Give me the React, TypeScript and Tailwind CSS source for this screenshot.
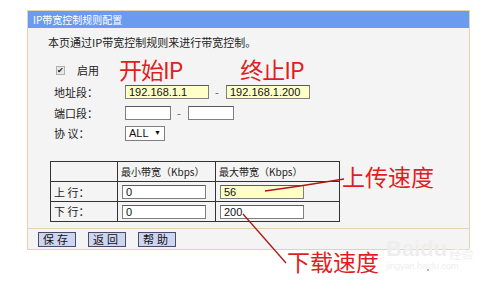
import React from "react";

const ui = { fontFamily: '"Noto Sans CJK SC", "Liberation Sans", sans-serif' };
const num = { fontFamily: '"Liberation Sans", Arial, sans-serif' };

function Field({ value = "", w, yellow = false }: { value?: string; w: string; yellow?: boolean }) {
  return (
    <div
      className={`${w} h-[14px] border border-[#7f7f7f] border-t-[#5a5a5a] ${yellow ? "bg-[#ffffc8]" : "bg-white"} text-[11px] leading-[12px] pl-[3px] text-[#111]`}
      style={num}
    >
      {value}
    </div>
  );
}

function Btn({ label }: { label: string }) {
  return (
    <div className="h-[15px] px-[4px] border border-[#4a4a6a] bg-[#cdd5ef] text-[11px] leading-[13px] tracking-[3px] text-[#111]">
      {label}
    </div>
  );
}

export default function App() {
  return (
    <div className="relative w-[500px] h-[293px] bg-white overflow-hidden" style={ui}>
      <div className="ml-[27px] mt-[10px] w-[443px] h-[240px] border border-[#e3d3b4] bg-[#f4f4f4] flex flex-col">
        {/* title bar */}
        <div className="h-[17px] bg-[#6a9bf0] text-white text-[10px] leading-[17px] pl-[5px]">IP带宽控制规则配置</div>

        <div className="flex-1 pl-[20px]">
          <div className="mt-[8px] h-[12px] text-[11px] leading-[12px] text-[#222]">本页通过IP带宽控制规则来进行带宽控制。</div>

          {/* enable row */}
          <div className="mt-[8px] h-[28px] flex items-center">
            <div className="ml-[8px] w-[9px] h-[9px] border border-[#b0b0b0] bg-[#e8e8e8] flex items-center justify-center text-[8px] leading-none text-[#222]">✔</div>
            <span className="ml-[12px] text-[11px] text-[#222]">启用</span>
            <span className="ml-[20px] text-[23px] leading-none tracking-[-1px] text-[#e11d1d] -mt-[2px]">开始IP</span>
            <span className="ml-[58px] text-[23px] leading-none tracking-[-1px] text-[#e11d1d] -mt-[2px]">终止IP</span>
          </div>

          {/* address */}
          <div className="mt-[1px] h-[14px] flex items-center">
            <span className="ml-[6px] w-[71px] text-[11px] text-[#222]">地址段：</span>
            <Field value="192.168.1.1" w="w-[84px]" yellow />
            <span className="mx-[6px] w-[5px] text-[11px] text-[#555]">-</span>
            <Field value="192.168.1.200" w="w-[84px]" yellow />
          </div>

          {/* port */}
          <div className="mt-[7px] h-[14px] flex items-center">
            <span className="ml-[6px] w-[71px] text-[11px] text-[#222]">端口段：</span>
            <Field w="w-[46px]" />
            <span className="mx-[6px] w-[5px] text-[11px] text-[#555]">-</span>
            <Field w="w-[46px]" />
          </div>

          {/* protocol */}
          <div className="mt-[6px] h-[15px] flex items-center">
            <span className="ml-[6px] w-[71px] text-[11px] text-[#222]">协 议：</span>
            <div className="w-[40px] h-[15px] border border-[#7f7f7f] bg-white flex items-center justify-between px-[3px] text-[11px] text-[#111]" style={num}>
              <span>ALL</span>
              <span className="text-[7px]">▼</span>
            </div>
          </div>

          {/* bandwidth table */}
          <div className="mt-[20px] ml-[2px] w-[290px] border border-[#333] text-[10px] text-[#222]">
            <div className="h-[20px] flex border-b border-[#333]">
              <div className="w-[67px] border-r border-[#333]" />
              <div className="w-[98px] border-r border-[#333] pl-[3px] leading-[20px]">最小带宽（Kbps）</div>
              <div className="flex-1 pl-[3px] leading-[20px]">最大带宽（Kbps）</div>
            </div>
            <div className="h-[20px] flex border-b border-[#333]">
              <div className="w-[67px] border-r border-[#333] pl-[3px] leading-[20px] text-[11px]">上 行：</div>
              <div className="w-[98px] border-r border-[#333] pl-[4px] flex items-center">
                <Field value="0" w="w-[84px]" />
              </div>
              <div className="flex-1 pl-[4px] flex items-center">
                <Field value="56" w="w-[84px]" yellow />
              </div>
            </div>
            <div className="h-[19px] flex">
              <div className="w-[67px] border-r border-[#333] pl-[3px] leading-[19px] text-[11px]">下 行：</div>
              <div className="w-[98px] border-r border-[#333] pl-[4px] flex items-center">
                <Field value="0" w="w-[84px]" />
              </div>
              <div className="flex-1 pl-[4px] flex items-center">
                <Field value="200" w="w-[84px]" />
              </div>
            </div>
          </div>
        </div>

        {/* footer */}
        <div className="h-[21px] border-t border-[#e3d3b4] flex items-center gap-[12px] pl-[10px]">
          <Btn label="保存" />
          <Btn label="返回" />
          <Btn label="帮助" />
        </div>
      </div>

      {/* annotations */}
      <svg className="absolute left-0 top-0" width="500" height="293">
        <path d="M265 191 L300 186 L344 179" stroke="#b01818" strokeWidth="1.6" fill="none" />
        <path d="M243 214 L286 263" stroke="#b01818" strokeWidth="1.3" fill="none" />
        <circle cx="428" cy="270" r="0.8" fill="#555" />
      </svg>
      <span className="absolute left-[342px] top-[165px] text-[23px] leading-none text-[#e11d1d]">上传速度</span>
      <span className="absolute left-[287px] top-[250px] text-[23px] leading-none text-[#e11d1d]">下载速度</span>

      {/* watermark */}
      <div className="absolute left-[386px] top-[238px] flex flex-col items-start text-[#eeeeee]">
        <div className="flex items-end">
          <span className="text-[22px] leading-none font-bold" style={num}>Bai</span>
          <span className="text-[22px] leading-none font-bold" style={num}>du</span>
          <span className="ml-[2px] text-[12px] leading-none">经验</span>
        </div>
        <span className="mt-[2px] text-[9px] leading-none" style={num}>jingyan.baidu.com</span>
      </div>
    </div>
  );
}
